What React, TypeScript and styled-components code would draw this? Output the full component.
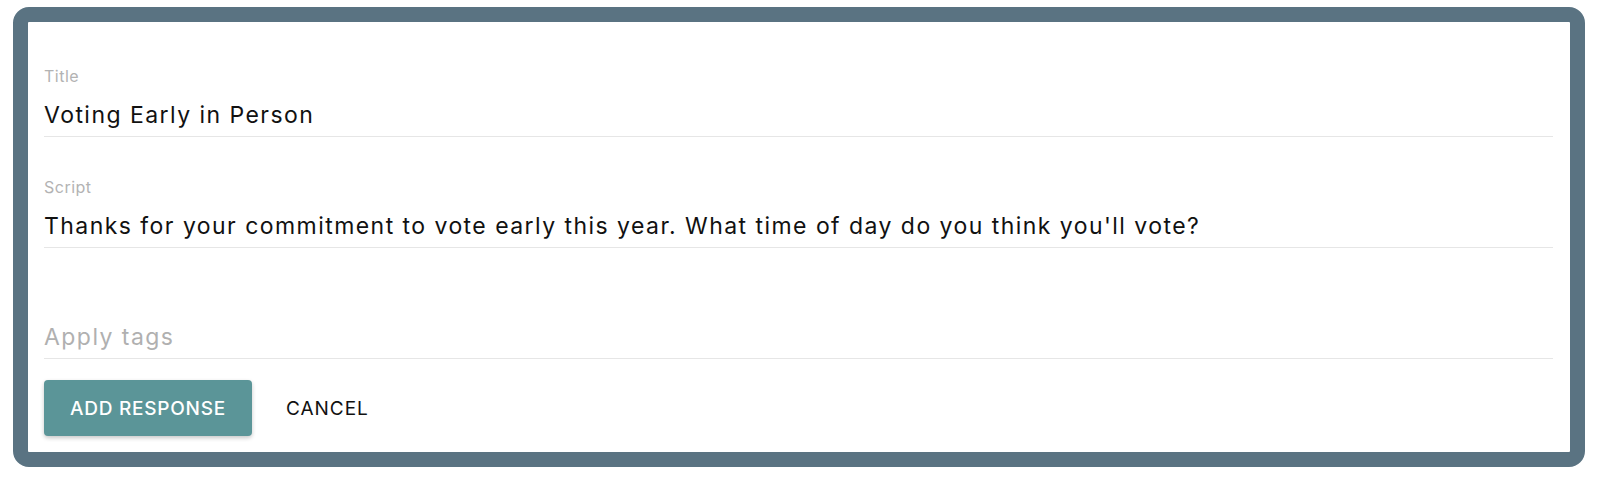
import React from 'react';
import styled, { createGlobalStyle } from 'styled-components';

// --- Styled Components ---

const GlobalStyle = createGlobalStyle`
  html, body {
    margin: 0;
    padding: 0;
    background: #ffffff;
  }
  * {
    box-sizing: border-box;
  }
`;

const Page = styled.div`
  padding: 7px 15px 16px 13px;
  font-family: Inter, 'Liberation Sans', sans-serif;
`;

const Frame = styled.div`
  border: 15px solid #5a7382;
  border-radius: 16px;
  background: #ffffff;
  padding: 4px 17px 16px 16px;
`;

const Field = styled.div`
  display: flex;
  flex-direction: column;
  padding: 40px 0 5px;
  border-bottom: 1px solid #e6e6e6;
`;

const Label = styled.label`
  height: 20px;
  margin-bottom: 13px;
  font-size: 16px;
  line-height: 20px;
  letter-spacing: 0.5px;
  color: #b3b3b3;
`;

const Value = styled.div<{ $placeholder?: boolean }>`
  font-size: 23px;
  line-height: 32px;
  letter-spacing: 1.45px;
  color: ${(p) => (p.$placeholder ? '#b0b0b0' : '#111111')};
  white-space: nowrap;
`;

const ButtonRow = styled.div`
  display: flex;
  align-items: center;
  gap: 18px;
  margin-top: 21px;
`;

const PrimaryButton = styled.button`
  height: 56px;
  padding: 0 26px;
  border: none;
  border-radius: 4px;
  background: #5b9598;
  color: #ffffff;
  font-family: inherit;
  font-size: 19px;
  font-weight: 500;
  letter-spacing: 0.75px;
  text-transform: uppercase;
  box-shadow: 0 2px 4px rgba(0, 0, 0, 0.22);
  cursor: pointer;
`;

const TextButton = styled.button`
  height: 56px;
  padding: 0 16px;
  border: none;
  background: transparent;
  color: #111111;
  font-family: inherit;
  font-size: 19px;
  letter-spacing: 1px;
  text-transform: uppercase;
  cursor: pointer;
`;

// --- The Main Component ---

const App = () => {
  return (
    <>
      <GlobalStyle />
      <Page>
        <Frame>
          <Field>
            <Label>Title</Label>
            <Value>Voting Early in Person</Value>
          </Field>
          <Field>
            <Label>Script</Label>
            <Value>
              Thanks for your commitment to vote early this year. What time of day do you think you'll vote?
            </Value>
          </Field>
          <Field>
            <Label />
            <Value $placeholder>Apply tags</Value>
          </Field>
          <ButtonRow>
            <PrimaryButton>Add Response</PrimaryButton>
            <TextButton>Cancel</TextButton>
          </ButtonRow>
        </Frame>
      </Page>
    </>
  );
};

export default App;
